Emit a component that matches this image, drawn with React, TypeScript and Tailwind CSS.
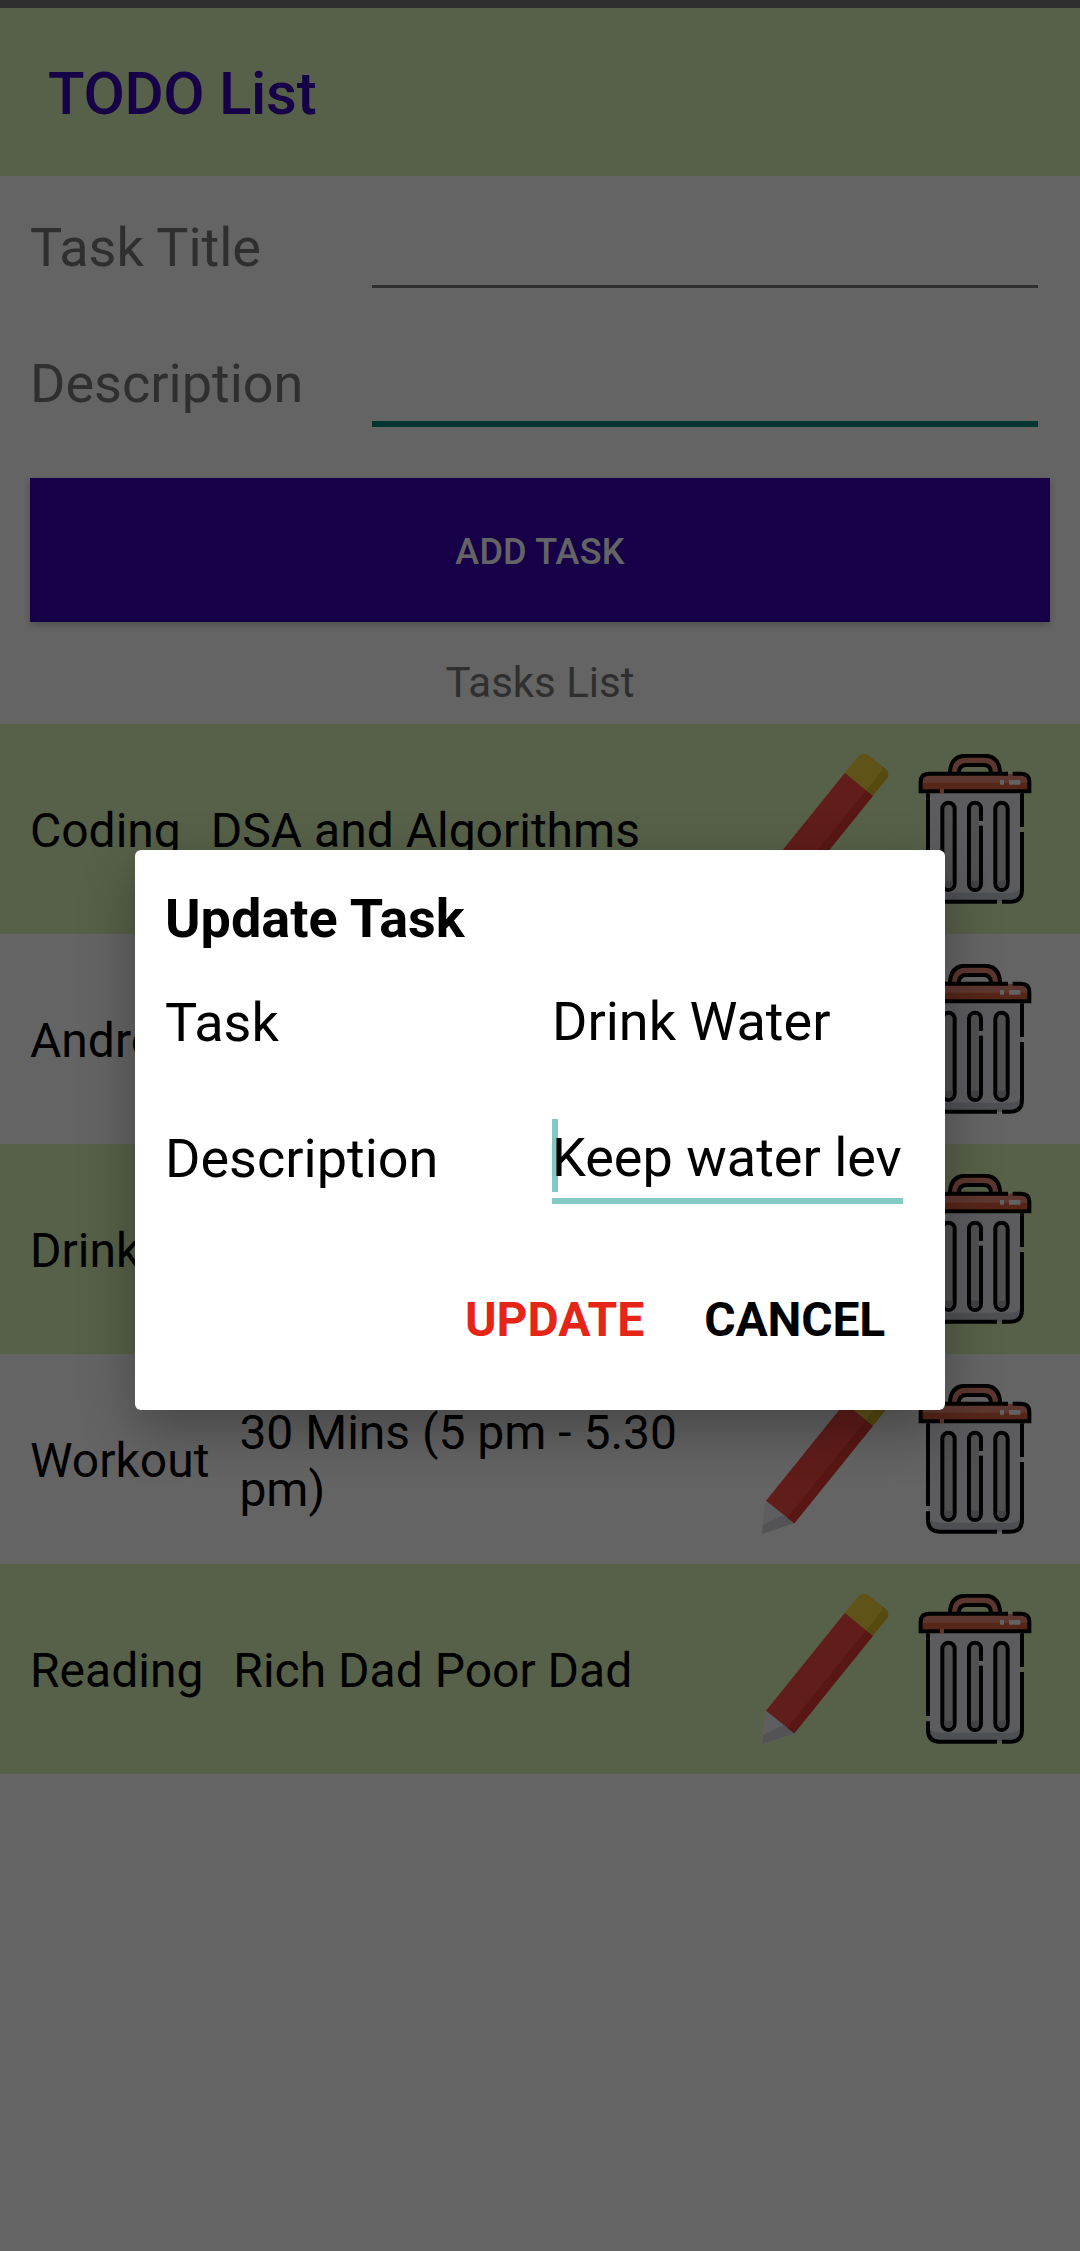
import React from "react";

type Task = { title: string; description: string };

const tasks: Task[] = [
  { title: "Coding", description: "DSA and Algorithms" },
  { title: "Android", description: "Todo App" },
  { title: "Drink Water", description: "Keep water level" },
  { title: "Workout", description: "30 Mins (5 pm - 5.30 pm)" },
  { title: "Reading", description: "Rich Dad Poor Dad" },
];

function PencilIcon() {
  return (
    <svg viewBox="30 72 450 450" className="size-[150px] shrink-0">
      <path d="M78 422L163 490L66 522Q68 470 78 422Z" fill="#ececf0" />
      <path d="M70 494L132 465L163 490L66 522Z" fill="#cfcfd5" />
      <path d="M315 128L399 197L163 490L78 422Z" fill="#f04a42" />
      <path d="M378 180L399 197L163 490L142 473Z" fill="#dc3b34" />
      <path d="M315 128L354 80Q368 65 385 76L436 116Q450 128 442 143L399 197Z" fill="#f0d03e" />
      <path d="M378 180L420 130Q430 118 424 107L436 116Q450 128 442 143L399 197Z" fill="#d9b82a" />
    </svg>
  );
}

function TrashIcon() {
  return (
    <svg viewBox="480 72 450 450" className="size-[150px] shrink-0">
      <path d="M564 184H846V480Q846 515 811 515H599Q564 515 564 480Z" fill="#e5e6ee" />
      <path d="M570 474Q574 488 600 488H810Q836 488 840 474V484Q838 515 811 515H599Q570 512 570 484Z" fill="#c0c6d0" />
      <path d="M630 128V122Q632 77 674 77H736Q778 80 780 128H753Q753 106 730 106H680Q658 106 656 128Z" fill="#e88b76" />
      <path d="M542 184V156Q542 131 567 131H843Q868 131 868 156V184Z" fill="#e88b76" />
      <path d="M548 158H862V178H548Z" fill="#d8603e" />
      <path d="M780 150H792V164H780ZM807 150H841V164H807Z" fill="#f5f5fa" />
      <path d="M600 178H612V191H600Z" fill="#e88b76" />
      <g fill="none" stroke="#000" strokeWidth="12">
        <path d="M630 128V124Q634 77 678 77H732Q776 77 780 124V128M656 128Q657 105 680 105H730Q753 105 753 128" />
        <path d="M804 131H567Q542 131 542 156V184H600M612 184H868V156Q868 131 843 131H818" />
        <path d="M564 190V438M564 454V480Q564 515 599 515H771M786 515H811Q846 515 846 480V306M846 291V190" />
      </g>
      <g fill="#c8c8c8" stroke="#000" strokeWidth="12">
        <rect x="607" y="218" width="37" height="262" rx="18.5" />
        <rect x="687" y="218" width="36" height="262" rx="18" />
        <rect x="766" y="218" width="37" height="262" rx="18.5" />
      </g>
      <path d="M613 452H638V462Q636 474 625 474Q614 474 613 462ZM693 452H717V462Q716 474 705 474Q694 474 693 462ZM772 452H797V462Q796 474 785 474Q773 474 772 462Z" fill="#a9a9ac" />
      <path d="M716 273H730V287H716Z" fill="#e5e6ee" />
    </svg>
  );
}

function TaskRow({ task, tinted }: { task: Task; tinted: boolean }) {
  return (
    <li className={`flex h-[210px] items-center px-[30px] ${tinted ? "bg-[#d9f0b4]" : ""}`}>
      <span className="shrink-0 pt-[3px] whitespace-nowrap">{task.title}</span>
      <span className="mr-8 ml-[30px] min-w-0 flex-1 pt-[3px]">{task.description}</span>
      <button aria-label="Edit task"><PencilIcon /></button>
      <button aria-label="Delete task"><TrashIcon /></button>
    </li>
  );
}

function UpdateDialog() {
  return (
    <div
      role="dialog"
      className="flex h-[560px] w-[810px] flex-col rounded-[6px] bg-white px-[30px] text-[54px] leading-[64px] text-black shadow-[0_20px_54px_rgba(0,0,0,0.3)]"
    >
      <h2 className="mt-[37px] font-bold">Update Task</h2>
      <div className="mt-[40px] flex">
        <span className="w-[387px]">Task</span>
        <span className="-mt-px">Drink Water</span>
      </div>
      <div className="mt-[49px] flex h-[91px] items-start pt-[23px]">
        <span className="w-[387px]">Description</span>
        <div className="relative h-[77px] w-[351px] border-b-[6px] border-[#84cac4]">
          <span className="absolute -top-2 left-0 h-[73px] w-[6px] bg-[#84cac4]" />
          <span className="relative -top-px block overflow-hidden whitespace-nowrap">Keep water lev</span>
        </div>
      </div>
      <div className="mt-[97px] flex justify-end gap-[60px] pr-[30px] text-[48px] leading-[56px] font-bold">
        <button className="text-[#e52517]">UPDATE</button>
        <button className="tracking-[-0.2px]">CANCEL</button>
      </div>
    </div>
  );
}

export default function App() {
  return (
    <div className="relative h-[2251px] w-[1080px] overflow-hidden bg-[#fafafa] font-[Roboto,sans-serif]">
      <div className="h-2 bg-[#757575]" />
      <header className="flex h-[168px] items-center bg-[#d9f0b4] pt-1 pl-12">
        <h1 className="text-[60px] font-medium tracking-[-0.3px] text-[#3700b3]">TODO List</h1>
      </header>
      <main className="text-[#757575]">
        <div className="flex h-[136px] text-[54px] leading-[64px]">
          <label className="mt-[40px] w-[372px] pl-[30px]">Task Title</label>
          <div className="h-[112px] w-[666px] border-b-[3px] border-[#757575]" />
        </div>
        <div className="flex h-[166px] text-[54px] leading-[64px]">
          <label className="mt-[40px] w-[372px] pl-[30px]">Description</label>
          <div className="h-[115px] w-[666px] border-b-[6px] border-[#008577]" />
        </div>
        <button className="mx-[30px] flex h-[144px] w-[1020px] items-center justify-center bg-[#3700b3] pt-[3px] text-[36px] font-medium tracking-[0.2px] text-[#fafafa] shadow-[0_3px_8px_rgba(0,0,0,0.22)]">
          ADD TASK
        </button>
        <h2 className="mt-[36px] h-[66px] text-center text-[42px] leading-[50px]">Tasks List</h2>
        <ul className="text-[48px] leading-[57px] text-black">
          {tasks.map((task, i) => (
            <TaskRow key={task.title} task={task} tinted={i % 2 === 0} />
          ))}
        </ul>
      </main>
      <div className="absolute inset-0 flex justify-center bg-black/60 pt-[850px]">
        <UpdateDialog />
      </div>
    </div>
  );
}
